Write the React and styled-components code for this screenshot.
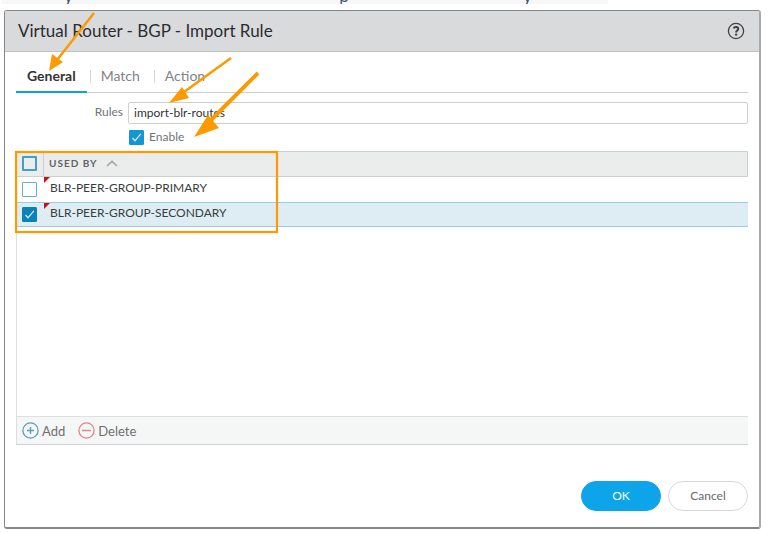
import { useState } from 'react'
import styled, { createGlobalStyle } from 'styled-components'

const GlobalStyle = createGlobalStyle`
    * {
        box-sizing: border-box;
    }

    body {
        margin: 0;
        background: #fff;
        font-family: Lato, "Open Sans", sans-serif;
        color: #333;
    }

    button, input {
        font-family: inherit;
    }
`;

const Page = styled.div`
    position: relative;
    min-height: 100vh;
    display: flex;
    flex-direction: column;
    padding: 0 7px 4px 4px;
    overflow: hidden;
`;

const Caption = styled.p`
    display: grid;
    grid-template-columns: 273fr 182fr 84fr;
    align-content: end;
    width: 80%;
    height: 4px;
    margin: 0 0 6px -2px;
    padding-left: 62px;
    overflow: hidden;
    background: #f7f7f7;
    color: #44546f;
    font-family: Inter, sans-serif;
    font-size: 16px;
    line-height: 16px;
`;

const Dialog = styled.section`
    flex: 1;
    display: flex;
    flex-direction: column;
    border: 1px solid #858687;
    border-right: 2px solid #a9aaab;
    border-bottom-width: 2px;
    border-radius: 3px;
    background: #fff;
`;

const DialogHeader = styled.header`
    display: flex;
    align-items: center;
    justify-content: space-between;
    height: 41px;
    padding: 0 14px 0 13px;
    border-bottom: 1px solid #bfc1c3;
    background: #d9dadc;
`;

const Title = styled.h1`
    margin: 0;
    padding-bottom: 2px;
    font-size: 17px;
    font-weight: 400;
    color: #2b2d30;
`;

const IconButton = styled.button`
    display: flex;
    padding: 0;
    border: none;
    background: none;
    cursor: pointer;
`;

const DialogBody = styled.div`
    flex: 1;
    display: flex;
    flex-direction: column;
    padding: 10px 11px 0;
`;

const Tabs = styled.nav`
    display: flex;
    gap: 3px;
    height: 31px;
    border-bottom: 1px solid #cbcdcf;
`;

const Tab = styled.button`
    position: relative;
    height: 31px;
    padding: 0 11px 2px;
    border: none;
    border-bottom: 2px solid ${props => props.$active ? '#12a1df' : 'transparent'};
    background: none;
    font-size: 14px;
    font-weight: ${props => props.$active ? 700 : 400};
    color: ${props => props.$active ? '#333' : '#808387'};
    cursor: pointer;

    &:not(:first-child)::before {
        content: "";
        position: absolute;
        left: 0;
        top: 8px;
        height: 13px;
        border-left: 1px solid #d3d5d7;
    }
`;

const Form = styled.form`
    display: grid;
    grid-template-columns: 107px 1fr;
    column-gap: 5px;
    row-gap: 6px;
    padding-top: 9px;
`;

const Label = styled.label`
    font-size: 12px;
    line-height: 19px;
    text-align: right;
    color: #707477;
`;

const Input = styled.input`
    width: 100%;
    height: 22px;
    padding: 0 5px 2px;
    border: 1px solid #cdd0d1;
    border-radius: 2px;
    outline: none;
    font-size: 12px;
    color: #333;
`;

const CheckLabel = styled.label`
    grid-column: 2;
    display: flex;
    align-items: flex-start;
    gap: 5px;
    height: 16px;
    padding-left: 1px;
    font-size: 12px;
    line-height: 14px;
    color: #707477;
`;

const CheckWrap = styled.span`
    position: relative;
    display: block;
    width: 15px;
    height: 15px;

    svg {
        position: absolute;
        inset: 0;
        pointer-events: none;
    }
`;

const CheckInput = styled.input`
    appearance: none;
    display: block;
    width: 15px;
    height: 15px;
    margin: 0;
    border: ${props => props.$strong ? 2 : 1}px solid ${props => props.$strong ? '#459fc4' : '#62afd0'};
    border-radius: 1px;
    background: ${props => props.$strong ? 'transparent' : '#fff'};

    &:checked {
        border-color: ${props => props.$fill};
        background: ${props => props.$fill};
    }
`;

const Panel = styled.div`
    flex: 1;
    display: flex;
    flex-direction: column;
    margin-top: 5px;
    border-left: 1px solid #dcdfe0;
    border-bottom: 1px solid #cfd1d8;
`;

const Table = styled.table`
    width: 100%;
    border-collapse: separate;
    border-spacing: 0;
    table-layout: fixed;
`;

const HeadCell = styled.th`
    width: ${props => props.$narrow ? '27px' : 'auto'};
    height: 26px;
    padding: 0 5px 2px;
    border: solid #cdd0d1;
    border-width: 1px 1px 1px 0;
    background: #ebedec;
    font-size: 10px;
    font-weight: 700;
    text-align: left;
    color: #606468;
`;

const SortLabel = styled.span`
    display: flex;
    align-items: center;
    gap: 8px;
    letter-spacing: 1px;
`;

const Row = styled.tr`
    background: ${props => props.$selected ? '#deedf4' : '#fff'};
`;

const Cell = styled.td`
    position: relative;
    height: 25px;
    padding: 0 6px 4px;
    border: solid ${props => props.$selected ? '#94cfe6' : 'transparent'};
    border-width: ${props => props.$selected ? '1px 0' : '0'};
    font-size: 12px;
    color: #3a3d40;

    &:first-child {
        padding: 0 5px;
    }
`;

const DirtyMark = styled.span`
    position: absolute;
    left: 0;
    top: 0;
    border-top: 6px solid #c5131a;
    border-right: 6px solid transparent;
`;

const Toolbar = styled.div`
    display: flex;
    align-items: center;
    gap: 13px;
    height: 28px;
    margin-top: auto;
    padding-left: 5px;
    border-top: 1px solid #dfe1e1;
    background: #f5f6f6;
`;

const ToolButton = styled.button`
    display: flex;
    align-items: center;
    gap: 3px;
    padding: 0;
    border: none;
    background: none;
    font-size: 13px;
    color: #707070;
    cursor: pointer;
`;

const DialogFooter = styled.footer`
    display: flex;
    justify-content: flex-end;
    gap: 7px;
    padding: 36px 11px 16px;
`;

const Button = styled.button`
    width: 80px;
    height: 30px;
    padding: 0 0 2px;
    border: 1px solid ${props => props.$primary ? '#0ea4e9' : '#d6d7d8'};
    border-radius: 15px;
    background: ${props => props.$primary ? '#0ea4e9' : '#fff'};
    font-size: 12px;
    color: ${props => props.$primary ? '#fff' : '#66696c'};
    cursor: pointer;
`;

const Annotations = styled.svg`
    position: absolute;
    top: 0;
    left: 0;
    pointer-events: none;
`;

const tabs = ['General', 'Match', 'Action'];

const groups = ['BLR-PEER-GROUP-PRIMARY', 'BLR-PEER-GROUP-SECONDARY'];

const CheckBox = ({ fill = '#1496d4', checked, ...rest }) => (
    <CheckWrap>
        <CheckInput type="checkbox" checked={checked} $fill={fill} {...rest} />
        {checked && (
            <svg width="15" height="15" viewBox="0 0 15 15" fill="none" stroke="#d5edf8" strokeWidth="1.3">
                <path d="M3.5 8 L6 10.8 L11.8 3.8" />
            </svg>
        )}
    </CheckWrap>
);

const App = () => {

    const [ activeTab, setActiveTab ] = useState('General');
    const [ ruleName, setRuleName ] = useState('import-blr-routes');
    const [ enabled, setEnabled ] = useState(true);
    const [ selected, setSelected ] = useState(['BLR-PEER-GROUP-SECONDARY']);

    const toggleGroup = (name) => {
        setSelected(selected.includes(name) ? selected.filter(item => item !== name) : [...selected, name]);
    };

    const allSelected = selected.length === groups.length;

  return (
    <Page>
        <GlobalStyle />
        <Caption><span>y</span><span>p</span><span>y</span></Caption>
        <Dialog>
            <DialogHeader>
                <Title>Virtual Router - BGP - Import Rule</Title>
                <IconButton aria-label="Help">
                    <svg width="18" height="18" viewBox="0 0 18 18" fill="none" stroke="#3f4144">
                        <circle cx="9" cy="9" r="7.6" strokeWidth="1.3" />
                        <path d="M6.7 6.4 C7.2 4.6 11.2 4.6 11.2 6.9 C11.2 8.5 9.1 8.4 9.1 10.4" strokeWidth="2" />
                        <circle cx="9.1" cy="12.6" r="1.2" fill="#3f4144" stroke="none" />
                    </svg>
                </IconButton>
            </DialogHeader>
            <DialogBody>
                <Tabs>
                    {
                        tabs.map((tab) => (
                            <Tab key={tab} $active={tab === activeTab} onClick={() => setActiveTab(tab)}>{tab}</Tab>
                        ))
                    }
                </Tabs>
                <Form onSubmit={(e) => e.preventDefault()}>
                    <Label htmlFor="ruleName">Rules</Label>
                    <Input
                        type="text"
                        id="ruleName"
                        value={ruleName}
                        onChange={(e) => setRuleName(e.target.value)}
                    />
                    <CheckLabel>
                        <CheckBox checked={enabled} onChange={() => setEnabled(!enabled)} />
                        Enable
                    </CheckLabel>
                </Form>
                <Panel>
                    <Table>
                        <thead>
                            <tr>
                                <HeadCell $narrow>
                                    <CheckBox
                                        $strong
                                        aria-label="Select all"
                                        checked={allSelected}
                                        onChange={() => setSelected(allSelected ? [] : groups)}
                                    />
                                </HeadCell>
                                <HeadCell>
                                    <SortLabel>
                                        USED BY
                                        <svg width="12" height="7" viewBox="0 0 12 7" fill="none" stroke="#a3a6a8" strokeWidth="1.6">
                                            <path d="M1 6 L6 1.3 L11 6" />
                                        </svg>
                                    </SortLabel>
                                </HeadCell>
                            </tr>
                        </thead>
                        <tbody>
                            {
                                groups.map((name) => (
                                    <Row key={name} $selected={selected.includes(name)}>
                                        <Cell $selected={selected.includes(name)}>
                                            <CheckBox
                                                fill="#0b82b8"
                                                aria-label={name}
                                                checked={selected.includes(name)}
                                                onChange={() => toggleGroup(name)}
                                            />
                                        </Cell>
                                        <Cell $selected={selected.includes(name)}>
                                            <DirtyMark />
                                            {name}
                                        </Cell>
                                    </Row>
                                ))
                            }
                        </tbody>
                    </Table>
                    <Toolbar>
                        <ToolButton>
                            <svg width="17" height="17" viewBox="0 0 17 17" fill="none" stroke="#5a9fbd">
                                <circle cx="8.5" cy="8.5" r="7.6" strokeWidth="1.3" />
                                <path d="M8.5 5 V12 M5 8.5 H12" strokeWidth="1.4" />
                            </svg>
                            Add
                        </ToolButton>
                        <ToolButton>
                            <svg width="17" height="17" viewBox="0 0 17 17" fill="none" stroke="#df8585">
                                <circle cx="8.5" cy="8.5" r="7.6" strokeWidth="1.3" />
                                <path d="M4 8.5 H13" strokeWidth="1.4" />
                            </svg>
                            Delete
                        </ToolButton>
                    </Toolbar>
                </Panel>
            </DialogBody>
            <DialogFooter>
                <Button $primary>OK</Button>
                <Button>Cancel</Button>
            </DialogFooter>
        </Dialog>
        <Annotations width="300" height="250" viewBox="0 0 300 250" fill="none" stroke="#ff9900">
            <path d="M94 13 L57 60" strokeWidth="2.5" />
            <path d="M231 58 L184 92" strokeWidth="2.5" />
            <path d="M258 73 L211 120" strokeWidth="4" />
            <path d="M49 71 L52 54 L63 62 Z M169 103 L182 87 L189 98 Z M194 137 L208 115 L219 128 Z" fill="#ff9900" stroke="none" />
            <rect x="16" y="152" width="261" height="80" strokeWidth="2.2" />
        </Annotations>
    </Page>
  )
}

export default App
